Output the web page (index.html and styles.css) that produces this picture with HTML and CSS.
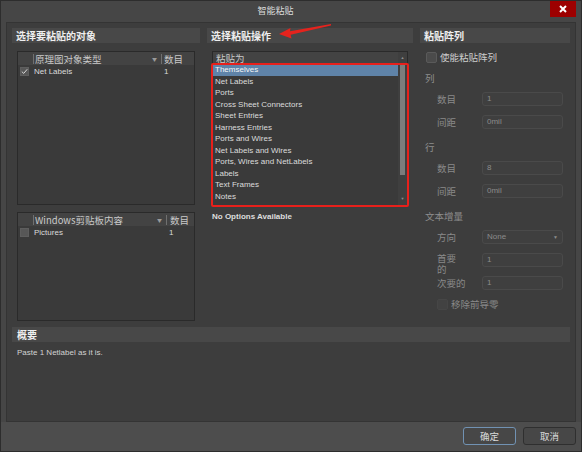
FILE: index.html
```html
<!DOCTYPE html>
<html lang="zh-CN">
<head>
    <meta charset="UTF-8">
    <meta name="viewport" content="width=device-width, initial-scale=1.0">
    <title>智能粘贴</title>
    <link rel="stylesheet" href="styles.css">
</head>
<body>
  <div class="window">
    <div class="titlebar">
      <span class="title">智能粘贴</span>
      <button class="close-btn">
        <svg width="8" height="8" viewBox="0 0 8 8"><path d="M1 1 L7 7 M7 1 L1 7" stroke="#fff" stroke-width="2"/></svg>
      </button>
    </div>

    <div class="content">
      <div class="columns">

        <!-- source objects -->
        <div class="col col-source">
          <div class="section-head">选择要粘贴的对象</div>

          <div class="obj-table">
            <div class="table-head">
              <div class="cell-check"></div>
              <div class="cell-name">原理图对象类型<span class="sort">&#9660;</span></div>
              <div class="cell-count">数目</div>
            </div>
            <div class="table-row">
              <div class="cell-check"><span class="checkbox checked"><svg width="7" height="7" viewBox="0 0 7 7"><path d="M0.8 3.6 L2.7 5.4 L6.2 1.3" fill="none" stroke="#d8d8d8" stroke-width="1"/></svg></span></div>
              <div class="cell-name">Net Labels</div>
              <div class="cell-count">1</div>
            </div>
          </div>

          <div class="obj-table clip-table">
            <div class="table-head">
              <div class="cell-check"></div>
              <div class="cell-name">Windows剪贴板内容<span class="sort">&#9660;</span></div>
              <div class="cell-count">数目</div>
            </div>
            <div class="table-row">
              <div class="cell-check"><span class="checkbox"></span></div>
              <div class="cell-name">Pictures</div>
              <div class="cell-count">1</div>
            </div>
          </div>
        </div>

        <!-- paste action -->
        <div class="col col-action">
          <div class="section-head">选择粘贴操作</div>

          <div class="listbox">
            <div class="list-main">
              <div class="list-head">粘贴为</div>
              <div class="list-items">
                <div class="list-item selected">Themselves</div>
                <div class="list-item">Net Labels</div>
                <div class="list-item">Ports</div>
                <div class="list-item">Cross Sheet Connectors</div>
                <div class="list-item">Sheet Entries</div>
                <div class="list-item">Harness Entries</div>
                <div class="list-item">Ports and Wires</div>
                <div class="list-item">Net Labels and Wires</div>
                <div class="list-item">Ports, Wires and NetLabels</div>
                <div class="list-item">Labels</div>
                <div class="list-item">Text Frames</div>
                <div class="list-item">Notes</div>
              </div>
            </div>
            <div class="scrollbar">
              <div class="scroll-arrow">&#9650;</div>
              <div class="scroll-track"><div class="scroll-thumb"></div></div>
              <div class="scroll-arrow">&#9660;</div>
            </div>
            <div class="highlight-box"></div>
          </div>

          <div class="no-options">No Options Available</div>
        </div>

        <!-- paste array -->
        <div class="col col-array">
          <div class="section-head">粘贴阵列</div>

          <label class="array-check">
            <span class="checkbox round"></span>使能粘贴阵列
          </label>

          <div class="group">
            <div class="group-title">列</div>
            <div class="field"><span class="field-label">数目</span><span class="input">1</span></div>
            <div class="field"><span class="field-label">间距</span><span class="input">0mil</span></div>
          </div>

          <div class="group">
            <div class="group-title">行</div>
            <div class="field"><span class="field-label">数目</span><span class="input">8</span></div>
            <div class="field"><span class="field-label">间距</span><span class="input">0mil</span></div>
          </div>

          <div class="group">
            <div class="group-title">文本增量</div>
            <div class="field"><span class="field-label">方向</span><span class="input select">None<span class="caret">&#9660;</span></span></div>
            <div class="field"><span class="field-label two-line">首要<br>的</span><span class="input">1</span></div>
            <div class="field"><span class="field-label">次要的</span><span class="input">1</span></div>
          </div>

          <label class="zero-check">
            <span class="checkbox round dim"></span>移除前导零
          </label>
        </div>
      </div>

      <div class="summary">
        <div class="section-head">概要</div>
        <div class="summary-text">Paste 1 Netlabel as it is.</div>
      </div>
    </div>

    <div class="footer">
      <button class="btn primary">确定</button>
      <button class="btn">取消</button>
    </div>

    <!-- pointer arrow next to the action heading -->
    <svg class="pointer" width="60" height="20" viewBox="0 0 60 20">
      <path d="M55 2 L14 9.3 L14.5 6 L3 12 L15.5 16.5 L14.6 12.8 L55 3.6 Z" fill="#e5231d"/>
    </svg>
  </div>
</body>
</html>
```

FILE: styles.css
```css
* {
  box-sizing: border-box;
}
body {
  margin: 0;
  background: #464646;
  font-family: "Liberation Sans", "Noto Sans CJK SC", sans-serif;
  font-size: 8px;
  color: #dadada;
}
.window {
  position: relative;
  width: 582px;
  height: 452px;
  display: flex;
  flex-direction: column;
  background: #464646;
  border: 1px solid #2d2d2d;
}
.titlebar {
  height: 21px;
  display: flex;
  align-items: flex-start;
}
.title {
  flex: 1;
  text-align: center;
  font-family: "Noto Sans CJK SC", sans-serif;
  font-size: 9px;
  line-height: 20px;
  color: #dcdcdc;
}
.close-btn {
  width: 26px;
  height: 16px;
  margin-right: 5px;
  padding: 0;
  border: none;
  background: #9d0000;
  display: flex;
  align-items: center;
  justify-content: center;
}
.content {
  height: 400px;
  margin: 0 5px;
  padding: 5px;
  background: #3d3d3d;
  border: 1px solid #343434;
}
.columns {
  display: flex;
  gap: 7px;
  height: 293px;
}
.col-source { width: 188px; }
.col-action { width: 206px; }
.col-array { width: 150px; }

.section-head {
  height: 15px;
  line-height: 15px;
  padding-left: 4px;
  background: #484848;
  font-family: "Noto Sans CJK SC", sans-serif;
  font-size: 10px;
  font-weight: bold;
  color: #efefef;
}

/* object tables */
.obj-table {
  margin: 8px 5px 0;
  height: 154px;
  background: #3a3a3a;
  border: 1px solid #2a2a2a;
}
.obj-table.clip-table {
  margin-top: 7px;
  height: 109px;
}
.table-head {
  display: flex;
  align-items: center;
  height: 13px;
  background: #434343;
  font-family: "Noto Sans CJK SC", sans-serif;
  font-size: 9.5px;
  color: #c9c9c9;
}
.table-head .cell-name,
.table-head .cell-count {
  border-left: 1px solid #707070;
  height: 10px;
  line-height: 10px;
}
.table-head .cell-name {
  position: relative;
}
.sort {
  position: absolute;
  right: 4px;
  top: 0;
  font-size: 5px;
  color: #9a9a9a;
}
.cell-check {
  width: 15px;
  flex-shrink: 0;
}
.cell-name {
  flex: 1;
  padding-left: 1px;
}
.cell-count {
  width: 33px;
  padding-left: 2px;
}
.clip-table .cell-count {
  width: 28px;
  padding-left: 3px;
}
.table-row {
  display: flex;
  align-items: center;
  height: 13px;
}
.table-row .cell-count {
  padding-left: 3px;
}
.checkbox {
  display: flex;
  align-items: center;
  justify-content: center;
  width: 9px;
  height: 9px;
  margin-left: 2px;
  background: #575757;
  border: 1px solid #5e5e5e;
}

/* paste-as list */
.listbox {
  position: relative;
  display: flex;
  height: 155px;
  margin: 8px 5px 0;
  background: #3a3a3a;
  border: 1px solid #2a2a2a;
}
.list-main {
  flex: 1;
}
.list-head {
  height: 12px;
  line-height: 12px;
  padding-left: 3px;
  background: #434343;
  font-family: "Noto Sans CJK SC", sans-serif;
  font-size: 9.5px;
  color: #c9c9c9;
}
.list-item {
  height: 11.5px;
  line-height: 11.5px;
  padding-left: 2px;
  color: #dcdcdc;
}
.list-item.selected {
  background: #5f83a8;
  color: #f6f6f6;
}
.scrollbar {
  width: 9px;
  display: flex;
  flex-direction: column;
  background: #3f3f3f;
}
.scroll-arrow {
  height: 12px;
  line-height: 12px;
  text-align: center;
  font-size: 4px;
  color: #8e8e8e;
}
.scroll-track {
  flex: 1;
}
.scroll-thumb {
  width: 5px;
  height: 111px;
  margin-left: 2px;
  background: #7c7c7c;
}
.highlight-box {
  position: absolute;
  top: 11px;
  left: -2px;
  right: -2px;
  bottom: -2px;
  border: 2px solid #e8201b;
  border-radius: 2px;
}
.no-options {
  margin-top: 5px;
  padding-left: 5px;
  line-height: 12px;
  font-weight: bold;
  color: #dedede;
}

/* paste array form */
.col-array {
  font-family: "Noto Sans CJK SC", sans-serif;
  font-size: 9.5px;
}
.array-check,
.zero-check {
  display: flex;
  align-items: center;
  gap: 3px;
  height: 12px;
  margin-top: 8px;
  padding-left: 6px;
  color: #cdcdcd;
}
.checkbox.round {
  width: 11px;
  height: 11px;
  margin-left: 0;
  border-radius: 2px;
  background: #4b4b4b;
  border-color: #5a5a5a;
}
.checkbox.dim {
  background: #424242;
  border-color: #464646;
}
.zero-check {
  margin-top: 8px;
  padding-left: 17px;
  color: #8a8a8a;
}
.group {
  padding-top: 5px;
}
.group + .group {
  padding-top: 8px;
}
.group-title {
  height: 20px;
  line-height: 20px;
  padding-left: 5px;
  color: #8e8e8e;
}
.field {
  display: flex;
  align-items: center;
  height: 14px;
  margin-top: 9px;
  color: #8a8a8a;
}
.group-title + .field {
  margin-top: 4px;
}
.field-label {
  width: 62px;
  padding-left: 17px;
  line-height: 12px;
}
.field-label.two-line {
  align-self: flex-start;
  line-height: 11px;
}
.input {
  position: relative;
  width: 81px;
  height: 14px;
  line-height: 12px;
  padding-left: 4px;
  background: #3f3f3f;
  border: 1px solid #4a4a4a;
  border-radius: 3px;
  font-family: "Liberation Sans", sans-serif;
  font-size: 8px;
  color: #8c8c8c;
}
.caret {
  position: absolute;
  right: 4px;
  top: 0;
  font-size: 5px;
  color: #8c8c8c;
}

.summary {
  margin-top: 6px;
}
.summary .section-head {
  padding-left: 5px;
}
.summary-text {
  margin-top: 5px;
  padding-left: 5px;
  line-height: 12px;
  color: #d2d2d2;
}

.footer {
  flex: 1;
  display: flex;
  justify-content: flex-end;
  gap: 7px;
  padding: 5px 5px 0 0;
  background: #4d4d4d;
}
.btn {
  width: 53px;
  height: 18px;
  padding: 0;
  background: #474747;
  border: 1px solid #2f2f2f;
  border-radius: 3px;
  font-family: "Noto Sans CJK SC", sans-serif;
  font-size: 9.5px;
  color: #dadada;
}
.btn.primary {
  border-color: #7192b3;
}

.pointer {
  position: absolute;
  left: 275px;
  top: 21px;
}
```
